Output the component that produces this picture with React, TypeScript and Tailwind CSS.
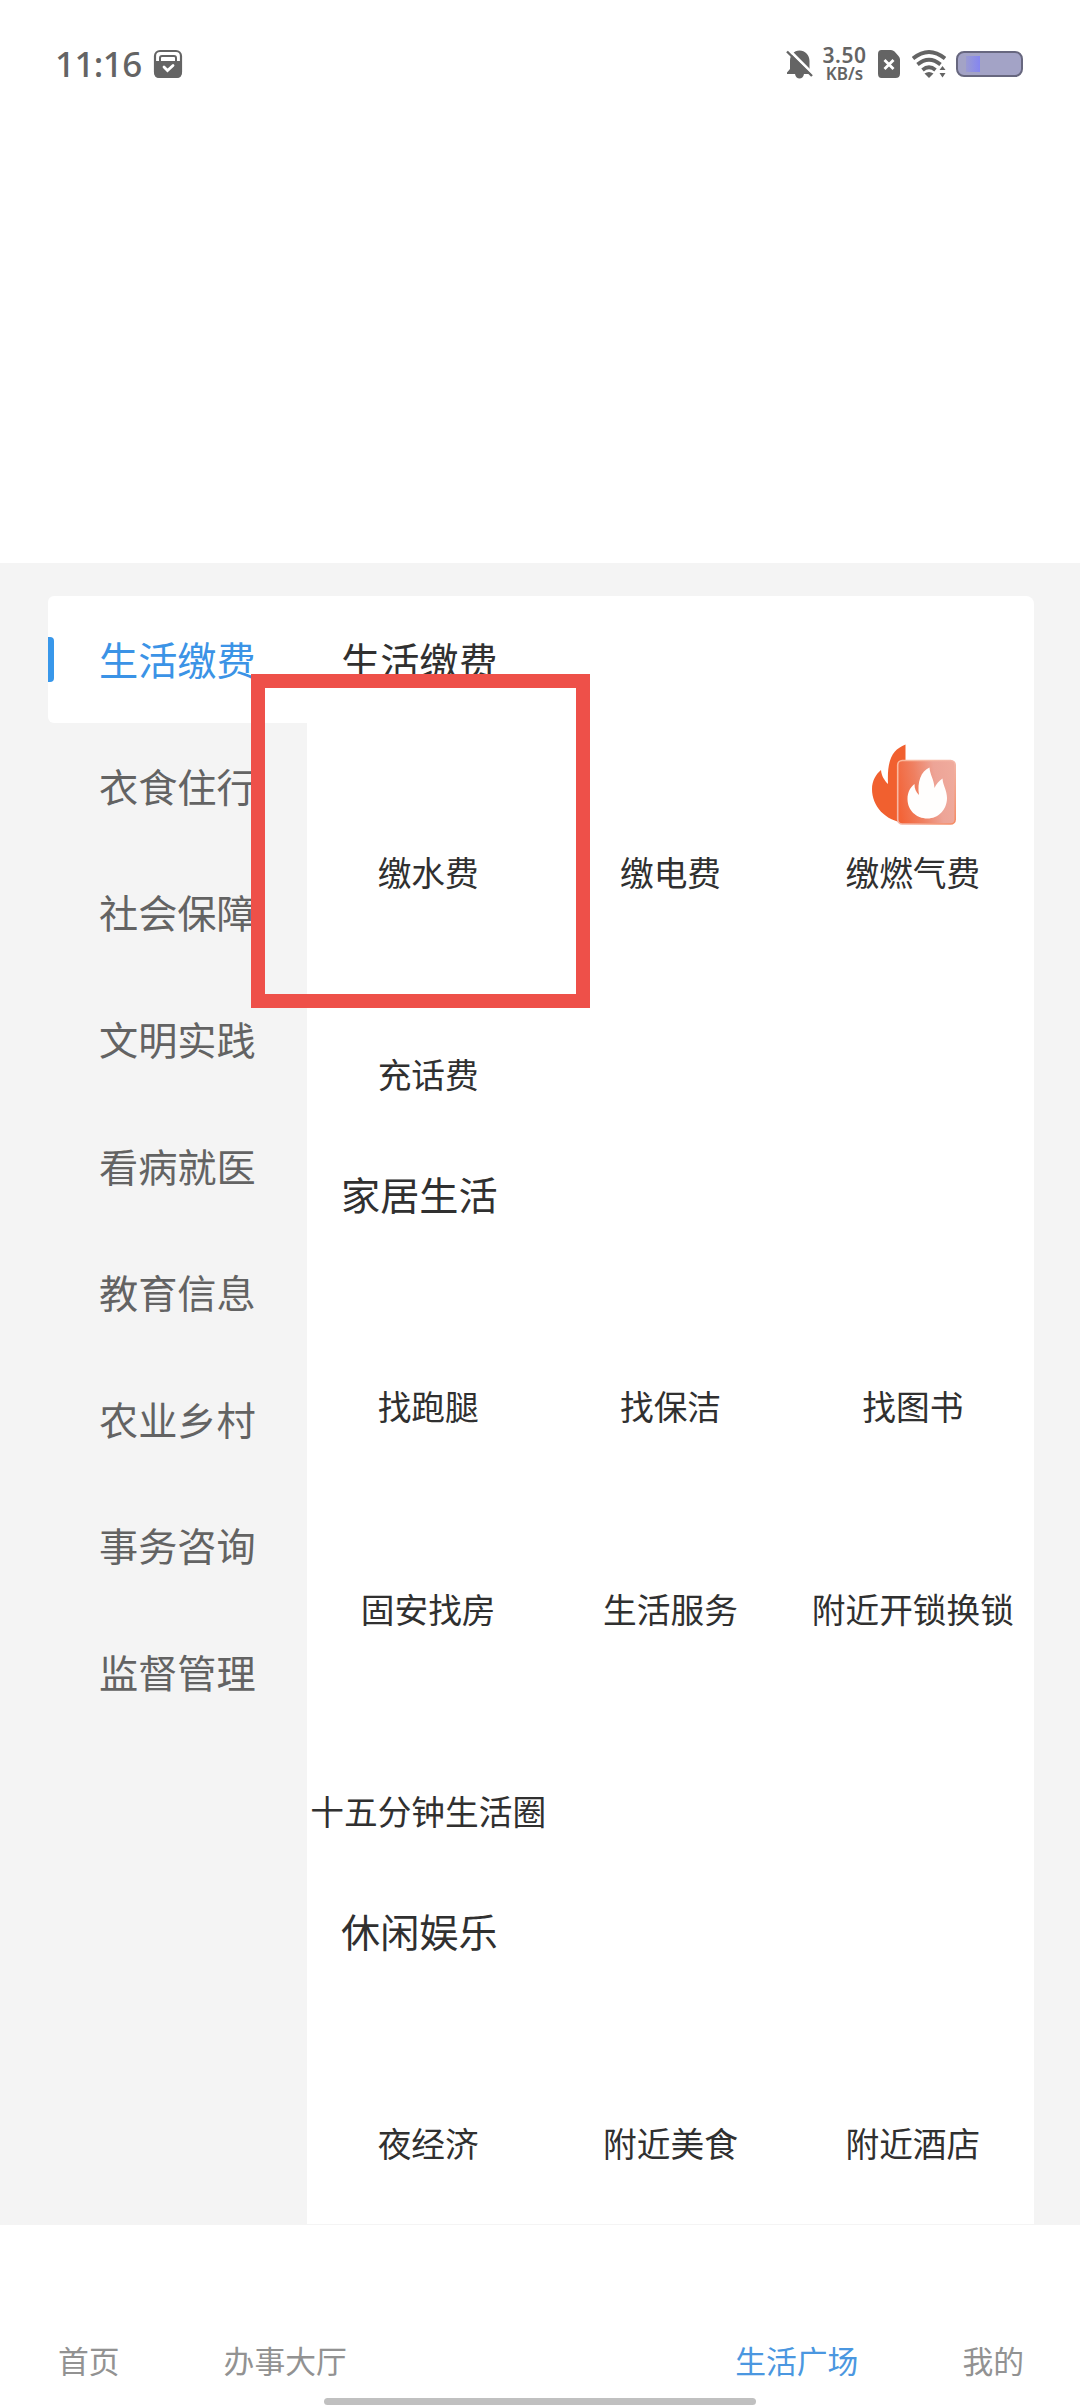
import React from 'react';

const categories = [
    '生活缴费',
    '衣食住行',
    '社会保障',
    '文明实践',
    '看病就医',
    '教育信息',
    '农业乡村',
    '事务咨询',
    '监督管理'
];

const sections = [
    { title: '生活缴费', items: ['缴水费', '缴电费', '缴燃气费', '充话费'] },
    {
        title: '家居生活',
        items: ['找跑腿', '找保洁', '找图书', '固安找房', '生活服务', '附近开锁换锁', '十五分钟生活圈']
    },
    { title: '休闲娱乐', items: ['夜经济', '附近美食', '附近酒店'] }
];

function GasIcon() {
    return (
        <svg viewBox="0 0 88 88" className="w-[88px] h-[88px]">
            <defs>
                <linearGradient id="tile" x1="0" y1="0.6" x2="1" y2="0.4">
                    <stop offset="0" stopColor="#f36438" />
                    <stop offset="0.35" stopColor="#ef7f60" />
                    <stop offset="0.7" stopColor="#eda497" />
                    <stop offset="1" stopColor="#efaa9c" />
                </linearGradient>
                <linearGradient id="tileEdge" x1="0" y1="0" x2="1" y2="1">
                    <stop offset="0" stopColor="#fbb99c" />
                    <stop offset="0.5" stopColor="#f3b6a8" />
                    <stop offset="1" stopColor="#f58a62" />
                </linearGradient>
            </defs>
            <path
                d="M36.5 3.5 V82 C16 80 3 65 3 48 C3 40 7 33 12 29 C12.5 35 15.5 39.5 19 43 C18 20 22.5 9 36.5 3.5 Z"
                fill="#f1602f"
            />
            <rect x="28.7" y="19.5" width="57.5" height="63.5" rx="4.5" fill="url(#tile)" stroke="url(#tileEdge)" strokeWidth="1.6" />
            <path
                d="M60.5 26.5 C61 34 65 38 65.5 47 C67 43 70 40 73.5 37.5 C74 45 78 49 78 57 C78 69 69 77.5 58.5 77.5 C47 77.5 38.5 69 38.5 58 C38.5 51 41.5 46 45.5 43 C45.5 48 47 51 50 54 C48 41 52 30 60.5 26.5 Z"
                fill="#fffefd"
            />
        </svg>
    );
}

function StatusBar() {
    return (
        <div className="h-[128px] pl-[55px] pr-[57px] flex items-center justify-between text-[#646464] fill-[#646464]">
            <div className="flex items-center">
                <span className="font-['Noto_Sans',sans-serif] font-medium text-[35px] leading-none tracking-[-0.6px] w-[98px] pb-[2px]">
                    11:16
                </span>
                <svg viewBox="0 0 30 30" className="w-[30px] h-[30px]">
                    <rect x="2" y="2" width="26" height="26" rx="5" fill="none" stroke="#646464" strokeWidth="2.2" />
                    <path d="M7 12 V9 Q7 7 9 7 H21 Q23 7 23 9 V12" fill="none" stroke="#646464" strokeWidth="2" />
                    <path d="M1.2 12 H28.8 V24 Q28.8 29 23.8 29 H6.2 Q1.2 29 1.2 24 Z" />
                    <path d="M11 18 L14.5 21.5 L20 16.5" fill="none" stroke="#fff" strokeWidth="2.8" strokeLinecap="round" />
                </svg>
            </div>
            <div className="flex items-center">
                <svg viewBox="0 0 28 30" className="w-[28px] h-[30px] mr-[8px]">
                    <path d="M13.5 1.5 C19 1.5 23.5 6 23.5 12 V20 L26 24 V25 H1 V23.5 L4 20 V12 C4 6 8 1.5 13.5 1.5 Z" />
                    <path d="M9 25 H18 C17.5 28 15.5 29.5 13.5 29.5 C11.5 29.5 9.5 28 9 25 Z" />
                    <path d="M2 0 L28 26" stroke="#fff" strokeWidth="3" />
                    <path d="M1 2.5 L26 27" stroke="#646464" strokeWidth="2.4" />
                </svg>
                <div className="w-[45px] flex flex-col items-center font-['Noto_Sans',sans-serif] font-semibold">
                    <span className="text-[21px] leading-[20px] tracking-[0.5px]">3.50</span>
                    <span className="text-[17px] leading-[18px]">KB/s</span>
                </div>
                <svg viewBox="0 0 24 30" className="w-[24px] h-[30px] ml-[10px] mr-[11px]">
                    <path d="M4.5 1 H14 Q16 1 17.5 2.5 L21.5 7 Q23 8.5 23 10.5 V24.5 Q23 29 18.5 29 H4.5 Q1 29 1 24.5 V5 Q1 1 4.5 1 Z" />
                    <path d="M7.5 11 L16.5 20 M16.5 11 L7.5 20" fill="none" stroke="#fff" strokeWidth="2.8" />
                </svg>
                <svg viewBox="0 0 34 30" className="w-[34px] h-[30px] mr-[10px]">
                    <path d="M1 9.5 Q17 -3.5 33 9.5" fill="none" stroke="#646464" strokeWidth="3.8" />
                    <path d="M5.5 15.5 Q17 6 28.5 15.5" fill="none" stroke="#646464" strokeWidth="3.8" />
                    <path d="M10.5 21 Q17 15.5 23.5 21" fill="none" stroke="#646464" strokeWidth="3.8" />
                    <path d="M12.5 24.5 Q17 21.5 21.5 24.5 L17 29 Z" />
                    <path d="M27.5 21 L30.5 17 L33.5 21 Z M27.5 24 H33.5 L30.5 28.5 Z" />
                </svg>
                <div className="w-[67px] h-[26px] rounded-[8px] border-[2.5px] border-[#67677f] bg-[#a3a3c6] pl-[8px] py-[3px] flex">
                    <div className="w-[14px] h-full bg-gradient-to-r from-[#9a9ad2] to-[#8585f0]" />
                </div>
            </div>
        </div>
    );
}

export default function App() {
    return (
        <div className="relative w-[1080px] h-[2408px] overflow-hidden bg-white flex flex-col font-['Noto_Sans_CJK_SC',sans-serif]">
            <StatusBar />

            {/* Category list and services */}
            <main className="mt-[435px] h-[1662px] shrink-0 bg-[#f4f4f4] pt-[33px] pl-[48px] pr-[46px] flex">
                <aside className="w-[259px] shrink-0">
                    {categories.map((name, i) => (
                        <div
                            key={name}
                            className={
                                i === 0
                                    ? 'h-[126.6px] flex items-center bg-white rounded-l-[6px] text-[#3b93e6]'
                                    : 'h-[126.6px] flex items-center text-[#636363]'
                            }
                        >
                            <span className={i === 0 ? 'w-[6px] h-[45px] bg-[#3897ea] rounded-r-[4px]' : 'w-[6px]'} />
                            <span className="ml-[45px] pb-[2px] text-[39.2px] leading-[58px] whitespace-nowrap">{name}</span>
                        </div>
                    ))}
                </aside>

                <section className="w-[727px] h-[1628px] bg-white rounded-tr-[8px]">
                    {sections.map((section) => (
                        <div key={section.title}>
                            <h2 className="h-[129.4px] pl-[34px] pb-[2px] flex items-center text-[39.2px] leading-none text-[#303030]">
                                {section.title}
                            </h2>
                            <div className="grid grid-cols-3">
                                {section.items.map((item) => (
                                    <div key={item} className="h-[202.5px] pt-[15.6px] flex flex-col items-center">
                                        <div className="h-[88px]">{item === '缴燃气费' && <GasIcon />}</div>
                                        <span className="mt-[18px] text-[33.7px] leading-[50px] whitespace-nowrap text-[#303030]">
                                            {item}
                                        </span>
                                    </div>
                                ))}
                            </div>
                        </div>
                    ))}
                </section>
            </main>

            {/* Bottom tabs */}
            <nav className="mt-[110px] pl-[58px] pr-[56px] flex justify-between text-[30.8px] leading-[50px] text-[#929292]">
                <div className="flex gap-[104px]">
                    <span>首页</span>
                    <span>办事大厅</span>
                </div>
                <div className="flex gap-[104px]">
                    <span className="text-[#4b97e0]">生活广场</span>
                    <span>我的</span>
                </div>
            </nav>
            <div className="mt-[13px] mx-auto w-[432px] h-[7px] shrink-0 rounded-full bg-[#c0c0c0]" />

            {/* Highlight frame over the water bill entry */}
            <div className="absolute left-[251px] top-[674px] w-[339px] h-[334px] border-[14px] border-[#ee5049]" />
        </div>
    );
}
